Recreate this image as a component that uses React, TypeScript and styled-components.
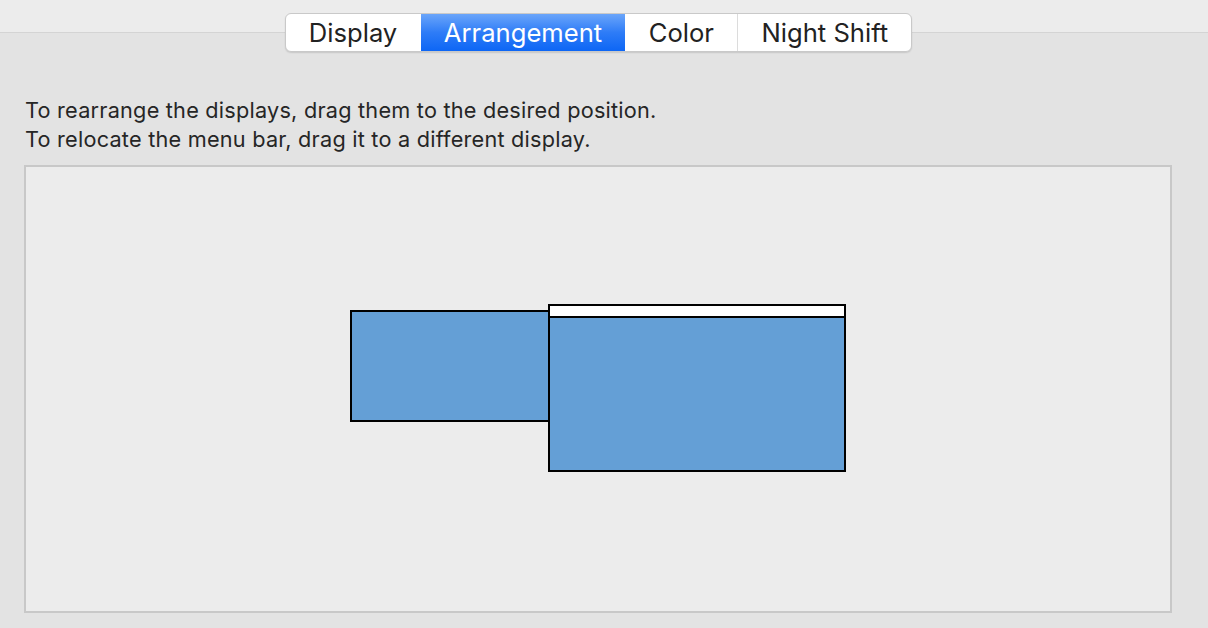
import React from "react"
import styled, { createGlobalStyle } from "styled-components"

const GlobalStyle = createGlobalStyle`
  html, body {
    margin: 0;
    padding: 0;
    background: #e3e3e3;
    font-family: Inter, "Liberation Sans", sans-serif;
    -webkit-font-smoothing: antialiased;
  }
`

const Window = styled.div`
  width: 1208px;
  height: 628px;
  overflow: hidden;
  background: #e3e3e3;
`

const TopBar = styled.div`
  display: flex;
  justify-content: center;
  padding: 13px 11px 0 0;
  background: linear-gradient(
    to bottom,
    #ececec 0,
    #ececec 32px,
    #d4d4d4 32px,
    #d4d4d4 33px,
    #e3e3e3 33px
  );
`

const Segmented = styled.div`
  display: flex;
  height: 37px;
  background: #ffffff;
  border: 1px solid #c9c9c9;
  border-radius: 6px;
  box-shadow: 0 1px 1.5px rgba(0, 0, 0, 0.12);
  overflow: hidden;
`

const Segment = styled.div<{ active?: boolean; divider?: boolean }>`
  display: flex;
  align-items: center;
  justify-content: center;
  padding: 0 23.3px;
  font-size: 25.6px;
  color: ${({ active }) => (active ? "#ffffff" : "#222222")};
  background: ${({ active }) =>
    active ? "linear-gradient(to bottom, #6aa5fa 0%, #2e7cf7 50%, #0d66f5 100%)" : "transparent"};
  border-left: ${({ divider }) => (divider ? "1px solid #dcdcdc" : "none")};
`

const Instructions = styled.div`
  margin: 44px 0 0 25px;
  font-size: 21.7px;
  letter-spacing: 0.22px;
  line-height: 29px;
  color: #262626;
`

const Arrangement = styled.div`
  position: relative;
  margin: 11px 0 0 24px;
  width: 1144px;
  height: 444px;
  background: #ececec;
  border: 2px solid #c8c8c8;
`

const Screen = styled.div<{ main?: boolean }>`
  position: absolute;
  box-sizing: border-box;
  display: flex;
  flex-direction: column;
  background: #649fd6;
  border: 2px solid #000000;
  z-index: ${({ main }) => (main ? 2 : 1)};
`

const MenuBar = styled.div`
  height: 10px;
  background: #ffffff;
  border-bottom: 2px solid #000000;
`

const screens = [
  { id: "secondary", left: 324, top: 143, width: 201, height: 112, main: false },
  { id: "primary", left: 522, top: 137, width: 298, height: 168, main: true },
]

export default function App() {
  return (
    <Window>
      <GlobalStyle />
      <TopBar>
        <Segmented>
          <Segment>Display</Segment>
          <Segment active>Arrangement</Segment>
          <Segment>Color</Segment>
          <Segment divider>Night Shift</Segment>
        </Segmented>
      </TopBar>
      <Instructions>
        To rearrange the displays, drag them to the desired position.
        <br />
        To relocate the menu bar, drag it to a different display.
      </Instructions>
      <Arrangement>
        {screens.map((s) => (
          <Screen
            key={s.id}
            main={s.main}
            style={{ left: s.left, top: s.top, width: s.width, height: s.height }}
          >
            {s.main && <MenuBar />}
          </Screen>
        ))}
      </Arrangement>
    </Window>
  )
}
